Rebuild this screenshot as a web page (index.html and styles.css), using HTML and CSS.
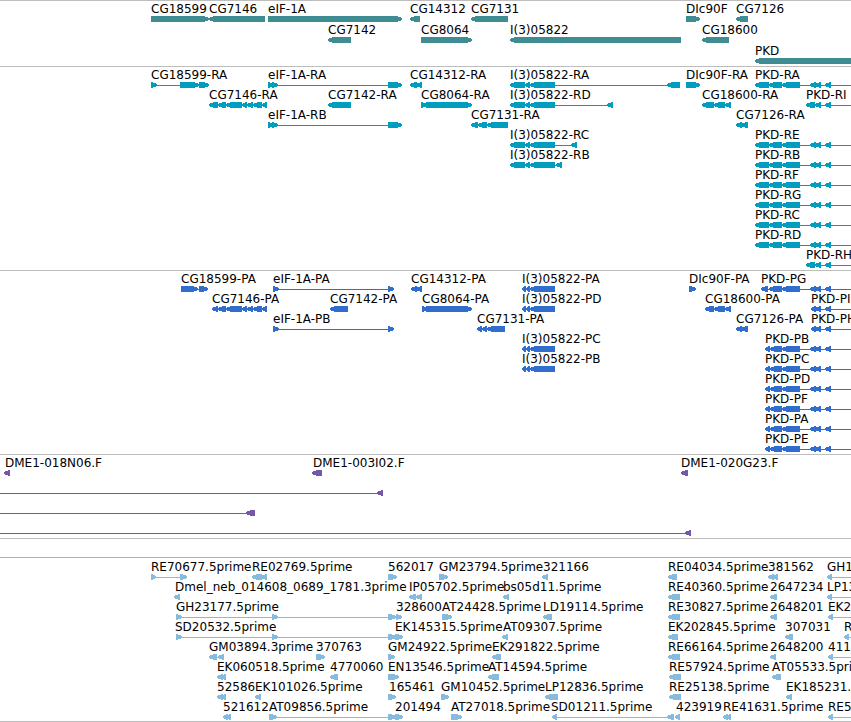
FILE: index.html
```html
<!DOCTYPE html>
<html lang="en">
<head>
<meta charset="utf-8">
<title>Genome browser tracks</title>
<link rel="stylesheet" href="styles.css">
</head>
<body>
<main class="browser" id="browser"></main>
<script src="tracks.js"></script>
</body>
</html>
```
FILE: styles.css
```css
body {
  margin: 0;
  background: #fff;
  color: #000;
  font-family: "DejaVu Sans", sans-serif;
  font-size: 12px;
  line-height: 14px;
}

.browser {
  overflow: hidden;
}

.track {
  display: flex;
  flex-direction: column;
  border-top: 1px solid #bdbdbd;
  padding: 1px 0 2px;
}

.track-genes {
  gap: 1px;
  color: #3f8d92;
}

.track-transcripts {
  color: #009dbf;
}

.track-proteins {
  color: #316dcc;
}

.track-bacs {
  color: #7657a8;
}

.track-ests {
  color: #87bbdd;
  border-bottom: 1px solid #bdbdbd;
  padding-bottom: 1px;
}

.row {
  position: relative;
  display: flex;
  flex-direction: column;
  justify-content: flex-end;
  height: 20px;
}

/* Labels sit at their feature's place on the sequence axis. */
.label {
  position: absolute;
  top: 0;
  color: #000;
  white-space: nowrap;
}

.glyphs {
  display: block;
  width: 100%;
  height: 6px;
  overflow: hidden;
  fill: currentColor;
  shape-rendering: crispEdges;
}
```
FILE: tracks.js
```js
// Feature: "label|label position|strand|blocks", blocks as start-end pairs.
// A block list ending in "+" runs on past the right edge, one starting with
// "+" comes in from the left edge.
const PKD_TAIL = "815-821 825-831 +";
const PKD_R = "755-769 769-782 782-800 810-816 " + PKD_TAIL;
const PKD_P = "765-770 770-782 782-800 810-816 " + PKD_TAIL;
const I3_R = "510-525 525-530 530-555";
const I3_P = "522-526 526-530 530-555";
const EIF_R = "268-273 272-278 388-402";
const EIF_P = "273-279 388-394";

const tracks = [
  ["genes", [
    ["CG18599|151|>|151-209", "CG7146|209|<|209-265", "eIF-1A|268|>|268-402", "CG14312|410|<|410-420", "CG7131|471|<|471-508", "DIc90F|686|>|686-700", "CG7126|736|<|736-748"],
    ["CG7142|328|<|328-351", "CG8064|421|>|421-472", "I(3)05822|510|<|510-681", "CG18600|702|<|702-729"],
    ["PKD|755|<|755-2000"]
  ]],
  ["transcripts", [
    ["CG18599-RA|151|>|151-157 180-199 199-209", "eIF-1A-RA|268|>|" + EIF_R, "CG14312-RA|410|<|410-417 416-422", "I(3)05822-RA|510|<|" + I3_R + " 667-680", "DIc90F-RA|686|>|686-700", "PKD-RA|755|<|" + PKD_R],
    ["CG7146-RA|209|<|209-218 218-226 226-242 242-247 247-253 253-262 262-267", "CG7142-RA|328|<|328-351", "CG8064-RA|421|>|421-427 426-472", "I(3)05822-RD|510|<|" + I3_R + " 607-613", "CG18600-RA|702|<|702-714 714-725 725-731", "PKD-RI|806|<|806-815 " + PKD_TAIL],
    ["eIF-1A-RB|268|>|" + EIF_R, "CG7131-RA|471|<|471-478 478-487 487-508", "CG7126-RA|736|<|736-742 741-748"],
    ["I(3)05822-RC|510|<|" + I3_R + " 571-577", "PKD-RE|755|<|" + PKD_R],
    ["I(3)05822-RB|510|<|" + I3_R + " 556-562", "PKD-RB|755|<|" + PKD_R],
    ["PKD-RF|755|<|" + PKD_R],
    ["PKD-RG|755|<|" + PKD_R],
    ["PKD-RC|755|<|" + PKD_R],
    ["PKD-RD|755|<|" + PKD_R],
    ["PKD-RH|806|<|806-815 " + PKD_TAIL]
  ]],
  ["proteins", [
    ["CG18599-PA|181|>|181-198 199-208", "eIF-1A-PA|273|>|" + EIF_P, "CG14312-PA|411|<|411-417 416-422", "I(3)05822-PA|522|<|" + I3_P, "DIc90F-PA|689|>|689-696", "PKD-PG|761|<|761-768 769-782 782-800 810-816 " + PKD_TAIL],
    ["CG7146-PA|212|<|212-218 218-226 226-242 242-247 247-253 253-262 262-267", "CG7142-PA|330|<|330-348", "CG8064-PA|422|>|422-427 426-472", "I(3)05822-PD|522|<|" + I3_P, "CG18600-PA|705|<|705-714 714-725 725-731", "PKD-PI|811|<|811-816 " + PKD_TAIL],
    ["eIF-1A-PB|273|>|" + EIF_P, "CG7131-PA|477|<|477-482 482-487 487-505", "CG7126-PA|736|<|736-742 741-748", "PKD-PH|811|<|811-816 " + PKD_TAIL],
    ["I(3)05822-PC|522|<|" + I3_P, "PKD-PB|765|<|" + PKD_P],
    ["I(3)05822-PB|522|<|" + I3_P, "PKD-PC|765|<|" + PKD_P],
    ["PKD-PD|765|<|" + PKD_P],
    ["PKD-PF|765|<|" + PKD_P],
    ["PKD-PA|765|<|" + PKD_P],
    ["PKD-PE|765|<|" + PKD_P]
  ]],
  ["bacs", [
    ["DME1-018N06.F|5|<|4-10", "DME1-003I02.F|313|<|312-322", "DME1-020G23.F|681|<|681-688"],
    ["||<|+ 377-383"],
    ["||<|+ 246-255"],
    ["||<|+ 685-691"]
  ]],
  ["ests", [
    ["||>|+ +"],
    ["RE70677.5prime|151|>|151-156 180-187", "RE02769.5prime|252|<|252-262 261-267", "562017|388|>|388-397", "GM23794.5prime|439|>|439-448", "321166|543|<|542-548", "RE04034.5prime|668|<|668-677", "381562|768|<|768-774 772-778", "GH1|827|<|827-832 +"],
    ["Dmel_neb_014608_0689_1781.3prime|175|<|174-180", "IP05702.5prime|409|<|409-416 416-422", "bs05d11.5prime|503|<|503-509", "RE40360.5prime|668|<|668-680", "2647234|770|<|770-777", "LP13|827|<|827-832 +"],
    ["GH23177.5prime|176|>|176-182 272-278 388-396", "328600|396|>|396-402", "AT24428.5prime|442|>|442-452", "LD19114.5prime|543|<|543-552", "RE30827.5prime|668|<|668-680", "2648201|770|<|770-777", "EK2|828|<|828-833 +"],
    ["SD20532.5prime|175|>|176-182 272-278 388-396", "EK145315.5prime|395|>|395-403", "AT09307.5prime|503|<|502-508", "EK202845.5prime|668|<|668-678", "307031|785|<|785-793", "R|844|<|844-849 +"],
    ["GM03894.3prime|209|<|209-217 218-224", "370763|316|>|316-325", "GM24922.5prime|388|>|388-395", "EK291822.5prime|492|<|492-501", "RE66164.5prime|668|<|668-680", "2648200|770|<|770-776", "411|828|<|828-833 +"],
    ["EK060518.5prime|217|<|217-223 220-226", "4770060|330|<|330-338", "EN13546.5prime|388|>|388-399", "AT14594.5prime|488|<|488-499", "RE57924.5prime|669|<|669-681", "AT05533.5prime|772|<|772-781"],
    ["52586|217|<|217-223 220-226", "EK101026.5prime|255|<|255-261", "165461|389|>|388-396", "GM10452.5prime|441|>|441-449", "LP12836.5prime|545|<|545-558", "RE25138.5prime|669|<|669-681", "EK185231.5prime|786|<|786-792"],
    ["521612|223|<|223-228 226-231", "AT09856.5prime|269|>|269-274 271-277 388-396", "201494|395|>|395-403", "AT27018.5prime|451|>|451-462", "SD01211.5prime|551|<|552-557 667-674", "423919|676|<|675-680", "RE41631.5prime|723|<|723-728 726-731", "RE5|828|<|828-833 +"]
  ]]
];

// A block is a bar with a blunt pointed head; short blocks are all head.
function block(start, end, strand) {
  const head = Math.min(6, end - start);
  return strand === "<"
    ? `<path d="M${start} 2L${start + head - 1} 0H${end}V6H${start + head - 1}L${start} 4z"/>`
    : `<path d="M${start} 0H${end - head + 1}L${end} 2V4L${end - head + 1} 6H${start}z"/>`;
}

function glyph(strand, blocks) {
  const parts = blocks.split(" ");
  const pairs = parts.filter(p => p !== "+").map(p => p.split("-").map(Number));
  const from = parts[0] === "+" ? 0 : pairs[0][0] + 2;
  const to = parts[parts.length - 1] === "+" ? 4000 : pairs[pairs.length - 1][1] - 2;
  return `<rect x="${from}" y="3" width="${to - from}" height="1"/>` +
    pairs.map(([start, end]) => block(start, end, strand)).join("");
}

document.getElementById("browser").innerHTML = tracks.map(([name, rows]) =>
  `<section class="track track-${name}">` + rows.map(row => {
    const features = row.map(f => f.split("|"));
    const labels = features.filter(f => f[0]).map(([label, x]) =>
      `<span class="label" style="left:${x}px">${label}</span>`).join("");
    const shapes = features.map(f => glyph(f[2], f[3])).join("");
    return `<div class="row">${labels}<svg class="glyphs" aria-hidden="true">${shapes}</svg></div>`;
  }).join("") + "</section>").join("");
```
